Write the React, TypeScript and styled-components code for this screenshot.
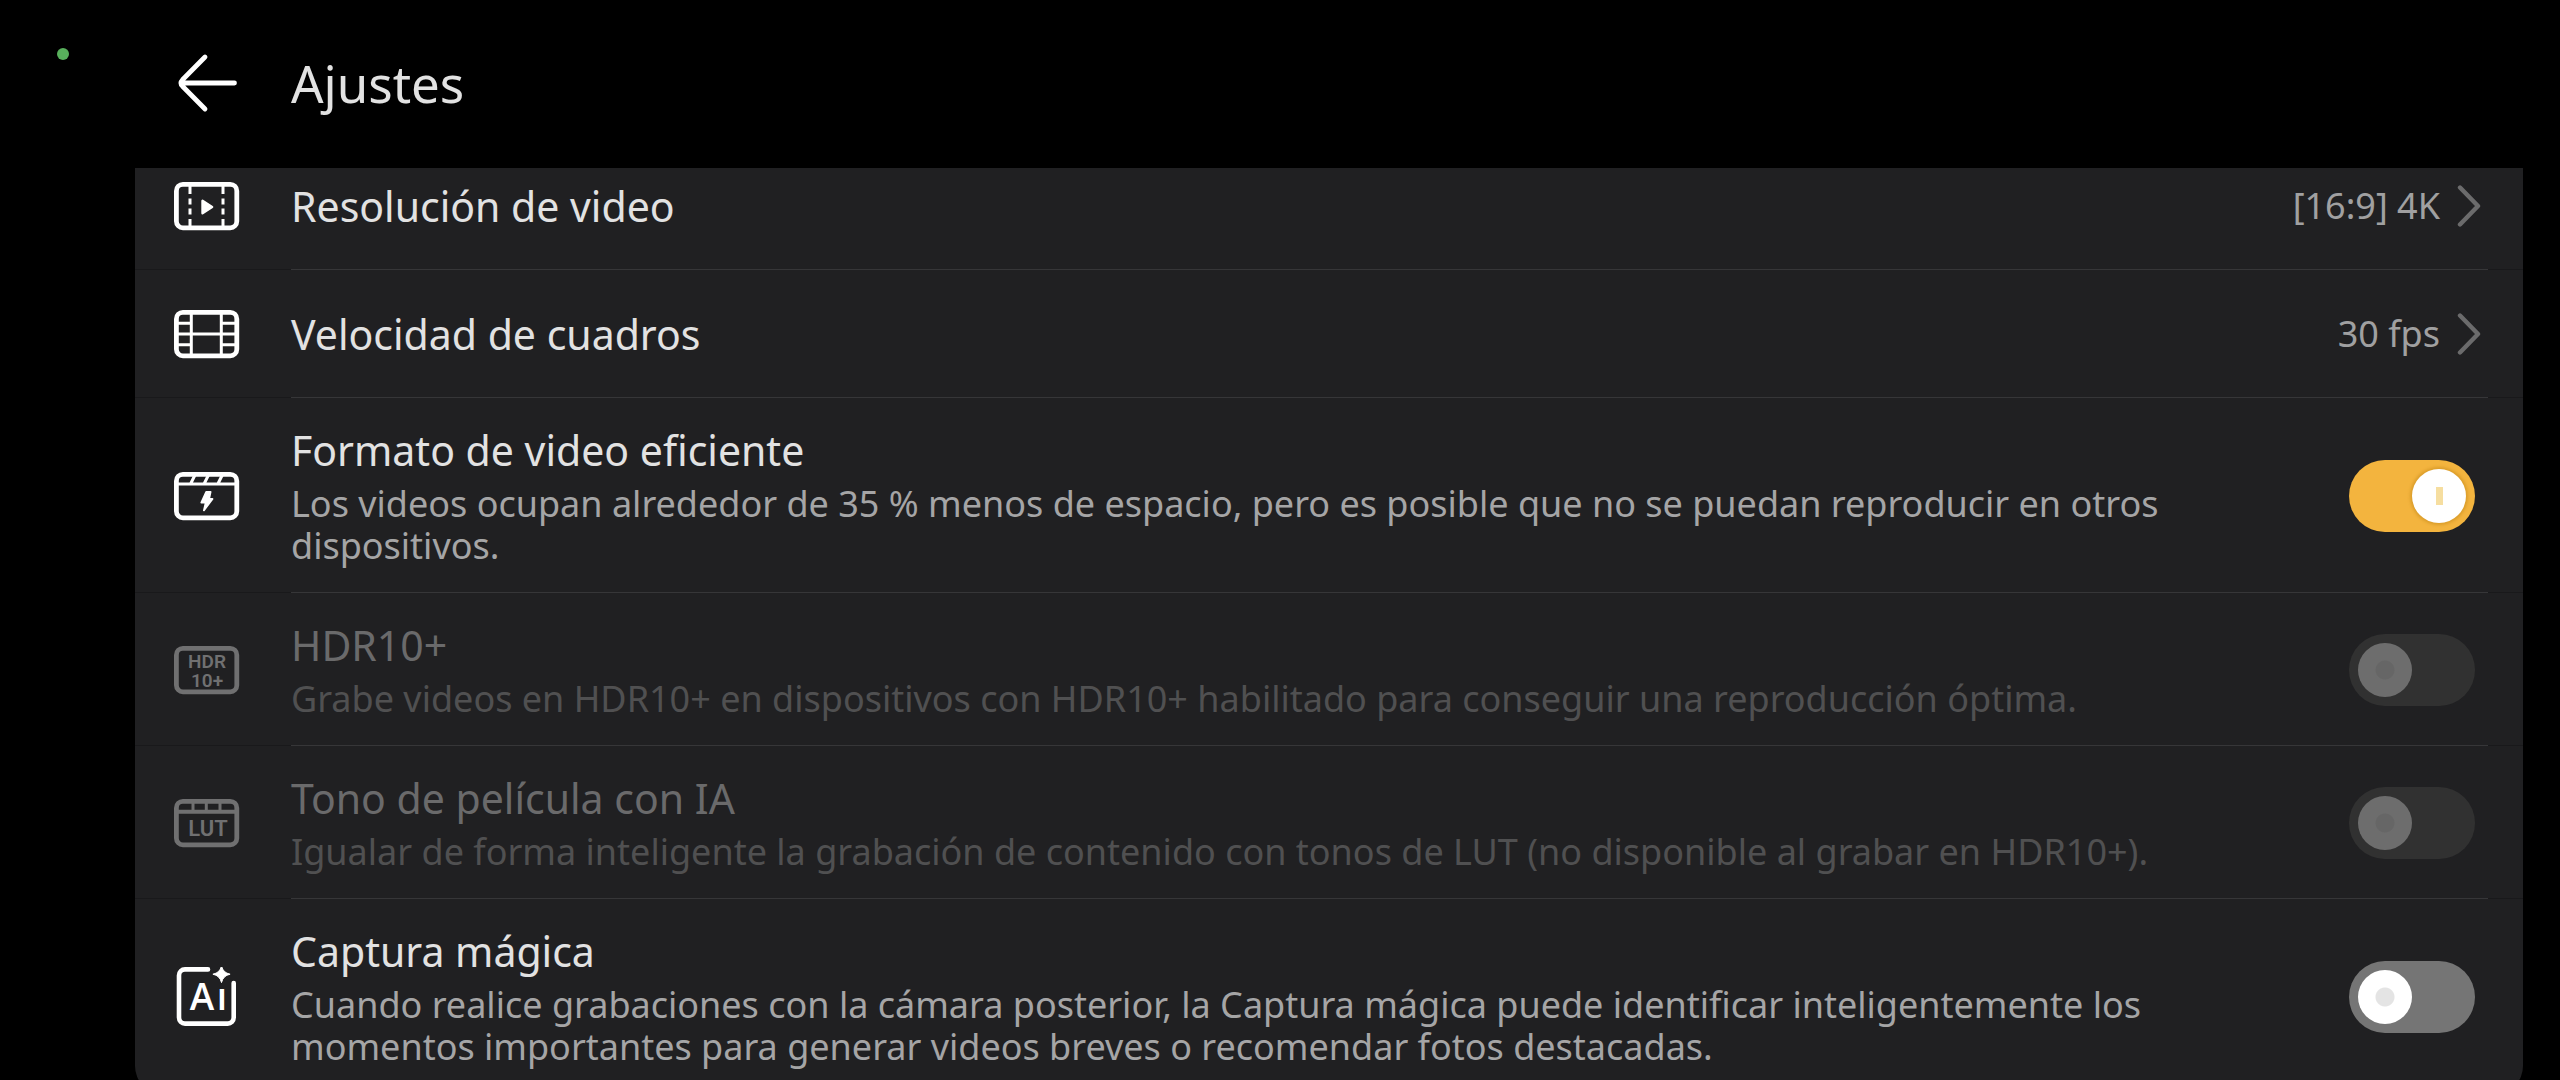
import React, { useState, type ReactNode } from 'react';
import styled, { createGlobalStyle, css } from 'styled-components';

const GlobalStyle = createGlobalStyle`
  *, *::before, *::after { box-sizing: border-box; }
  body {
    margin: 0;
    background: #000;
    color: #e2e2e2;
    font-family: "Noto Sans", "Open Sans", sans-serif;
  }
  button { font: inherit; color: inherit; background: none; border: 0; padding: 0; text-align: left; cursor: pointer; }
`;

const Screen = styled.div`
  display: grid;
  grid-template-columns: 135px minmax(0, 1fr);
  height: 100vh;
  padding-right: 37px;
  overflow: hidden;
`;

const StatusRail = styled.aside`
  padding: 48px 0 0 57px;
`;

const CameraDot = styled.div`
  width: 12px;
  height: 12px;
  border-radius: 50%;
  background: #58b05c;
`;

const Content = styled.main`
  display: flex;
  flex-direction: column;
  min-height: 0;
`;

const Header = styled.header`
  display: flex;
  flex: none;
  align-items: center;
  gap: 51px;
  height: 168px;
  padding: 0 39px 2px;
`;

const BackButton = styled.button`
  display: flex;
`;

const PageTitle = styled.h1`
  margin: 0;
  font-size: 51px;
  line-height: 68px;
  font-weight: 400;
`;

const ScrollArea = styled.div`
  flex: 1;
  min-height: 0;
  overflow: hidden;
`;

/* The list is scrolled up a little, so its first row is partly out of view. */
const List = styled.ul`
  list-style: none;
  margin: -26px 0 0;
  padding: 0;
  background: #202022;
  border-radius: 0 0 28px 28px;
  overflow: hidden;
`;

const Item = styled.li`
  &:not(:last-child) {
    background: linear-gradient(
      to right,
      #19191b 156px,
      #363638 156px,
      #363638 calc(100% - 35px),
      #19191b calc(100% - 35px)
    ) bottom / 100% 1px no-repeat;
  }
`;

const rowLayout = css`
  display: flex;
  align-items: center;
  width: 100%;
  min-height: 128px;
  padding: 0 42px 0 39px;
`;

const NavRow = styled.button`
  ${rowLayout}
`;

const SwitchRow = styled.label`
  ${rowLayout}
  cursor: pointer;
`;

const IconSlot = styled.span<{ $dim?: boolean }>`
  display: flex;
  flex: none;
  margin-right: 51px;
  color: ${(p) => (p.$dim ? '#707071' : '#fff')};
`;

const Texts = styled.span`
  display: flex;
  flex: 1;
  flex-direction: column;
  gap: 6px;
  min-width: 0;
  padding: 25px 100px 26px 0;
`;

const Title = styled.span<{ $dim?: boolean }>`
  font-size: 41px;
  line-height: 54px;
  color: ${(p) => (p.$dim ? '#6a6a6b' : '#e2e2e2')};
`;

const NavTitle = styled(Title)`
  flex: 1;
`;

const Description = styled.span<{ $dim?: boolean }>`
  font-size: 36px;
  line-height: 42px;
  color: ${(p) => (p.$dim ? '#505051' : '#a5a5a6')};
`;

const Value = styled.span`
  font-size: 36px;
  line-height: 42px;
  margin-right: 17px;
  color: #a0a0a1;
`;

const Switch = styled.input`
  appearance: none;
  display: flex;
  flex: none;
  align-items: center;
  width: 126px;
  height: 72px;
  margin: 0 6px 0 0;
  padding: 0 9px;
  border-radius: 36px;
  background: #757575;
  cursor: pointer;

  &::before {
    content: "";
    width: 54px;
    height: 54px;
    border-radius: 50%;
    background: radial-gradient(circle, #e4e4e4 9px, #fff 10px);
  }

  &:checked {
    justify-content: flex-end;
    background: #f3b43e;
  }

  &:checked::before {
    background: linear-gradient(#f6dea0, #f6dea0) center / 7px 18px no-repeat, #fff;
    box-shadow: 0 0 3px 2px rgba(190, 130, 20, 0.45);
  }

  &:disabled {
    background: #313131;
    cursor: default;
  }

  &:disabled::before {
    background: radial-gradient(circle, #666 9px, #6d6d6d 10px);
  }
`;

const Glyph = ({ children }: { children: ReactNode }) => (
  <svg width="66" height="60" viewBox="0 0 66 60" fill="none" stroke="currentColor" strokeWidth="3" aria-hidden="true">
    {children}
  </svg>
);

const Frame = () => <rect x="2.4" y="8.4" width="60.4" height="43.4" rx="6.5" strokeWidth="4.8" />;

const ResolutionIcon = () => (
  <Glyph>
    <Frame />
    <path d="M16 10v8M16 22.5v6M16 32.5v6M16 43v8M49 10v8M49 22.5v6M49 32.5v6M49 43v8" />
    <path d="M28.5 24.8v12.4l9.6-6.2z" fill="currentColor" strokeWidth="2.4" strokeLinejoin="round" />
  </Glyph>
);

const FrameRateIcon = () => (
  <Glyph>
    <Frame />
    <path d="M17.3 8v44M47.3 8v44M3 30h60M3 19.3h14.3M3 40.7h14.3M47.3 19.3h15M47.3 40.7h15" />
  </Glyph>
);

const EfficientIcon = () => (
  <Glyph>
    <Frame />
    <path d="M3 18h60M16.5 18l4.5-9M30 18l4.5-9M43.8 18l4.5-9" />
    <path d="M32.2 25.8h4.4l-1.5 7.2h3.4l-8.6 11.4 1.8-7.8h-4.4z" fill="currentColor" strokeWidth="1.8" strokeLinejoin="round" />
  </Glyph>
);

const GlyphText = styled.text`
  fill: currentColor;
  stroke: none;
  text-anchor: middle;
  font-family: Roboto, "Noto Sans", sans-serif;
  font-weight: 600;
`;

const HdrIcon = () => (
  <Glyph>
    <Frame />
    <GlyphText x="33" y="28" fontSize="19">HDR</GlyphText>
    <GlyphText x="33" y="47" fontSize="19">10+</GlyphText>
  </Glyph>
);

const LutIcon = () => (
  <Glyph>
    <Frame />
    <path d="M3 18.8h60" strokeWidth="4" />
    <path d="M19 9v9M32.3 9v9M46 9v9" />
    <GlyphText x="34" y="43" fontSize="22">LUT</GlyphText>
  </Glyph>
);

const MagicGlyphText = styled(GlyphText)`
  font-family: "Open Sans", "Noto Sans", sans-serif;
`;

const MagicIcon = () => (
  <Glyph>
    <path d="M34 2.4H11a6 6 0 0 0-6 6v42.2a6 6 0 0 0 6 6h42.7a6 6 0 0 0 6-6V16" strokeWidth="4.6" strokeLinecap="round" />
    <path d="M47.5-1q1.6 6.8 8.6 8.2-7 1.4-8.6 8.4-1.6-7-8.6-8.4 7-1.4 8.6-8.2z" fill="currentColor" strokeWidth="1" strokeLinejoin="round" />
    <MagicGlyphText x="28" y="43" fontSize="37">A</MagicGlyphText>
    <MagicGlyphText x="48" y="43" fontSize="37">ı</MagicGlyphText>
  </Glyph>
);

const BackArrow = () => (
  <svg width="66" height="60" viewBox="0 0 66 60" fill="none" stroke="#fff" strokeWidth="4.8" strokeLinecap="round" strokeLinejoin="round" aria-hidden="true">
    <path d="M31 4L8.5 26.8Q5.5 30 8.5 33.2L31 56M7 30h53.5" />
  </svg>
);

const Chevron = () => (
  <svg width="24" height="44" viewBox="0 0 24 44" fill="none" stroke="#6b6b6c" strokeWidth="4.4" strokeLinecap="round" strokeLinejoin="round" aria-hidden="true">
    <path d="M3 3.5L21 22 3 40.5" />
  </svg>
);

type NavItemProps = { icon: ReactNode; title: string; value: string };

const NavItem = ({ icon, title, value }: NavItemProps) => (
  <Item>
    <NavRow type="button">
      <IconSlot>{icon}</IconSlot>
      <NavTitle>{title}</NavTitle>
      <Value>{value}</Value>
      <Chevron />
    </NavRow>
  </Item>
);

type SwitchItemProps = { icon: ReactNode; title: string; description: string; on?: boolean; disabled?: boolean };

const SwitchItem = ({ icon, title, description, on = false, disabled }: SwitchItemProps) => {
  const [checked, setChecked] = useState(on);
  return (
    <Item>
      <SwitchRow>
        <IconSlot $dim={disabled}>{icon}</IconSlot>
        <Texts>
          <Title $dim={disabled}>{title}</Title>
          <Description $dim={disabled}>{description}</Description>
        </Texts>
        <Switch
          type="checkbox"
          role="switch"
          checked={checked}
          disabled={disabled}
          onChange={(e) => setChecked(e.target.checked)}
        />
      </SwitchRow>
    </Item>
  );
};

export default function App() {
  return (
    <Screen>
      <GlobalStyle />
      <StatusRail>
        <CameraDot />
      </StatusRail>
      <Content>
        <Header>
          <BackButton type="button" aria-label="Atrás">
            <BackArrow />
          </BackButton>
          <PageTitle>Ajustes</PageTitle>
        </Header>
        <ScrollArea>
          <List>
            <NavItem icon={<ResolutionIcon />} title="Resolución de video" value="[16:9] 4K" />
            <NavItem icon={<FrameRateIcon />} title="Velocidad de cuadros" value="30 fps" />
            <SwitchItem
              icon={<EfficientIcon />}
              title="Formato de video eficiente"
              description="Los videos ocupan alrededor de 35 % menos de espacio, pero es posible que no se puedan reproducir en otros dispositivos."
              on
            />
            <SwitchItem
              icon={<HdrIcon />}
              title="HDR10+"
              description="Grabe videos en HDR10+ en dispositivos con HDR10+ habilitado para conseguir una reproducción óptima."
              disabled
            />
            <SwitchItem
              icon={<LutIcon />}
              title="Tono de película con IA"
              description="Igualar de forma inteligente la grabación de contenido con tonos de LUT (no disponible al grabar en HDR10+)."
              disabled
            />
            <SwitchItem
              icon={<MagicIcon />}
              title="Captura mágica"
              description="Cuando realice grabaciones con la cámara posterior, la Captura mágica puede identificar inteligentemente los momentos importantes para generar videos breves o recomendar fotos destacadas."
            />
          </List>
        </ScrollArea>
      </Content>
    </Screen>
  );
}
